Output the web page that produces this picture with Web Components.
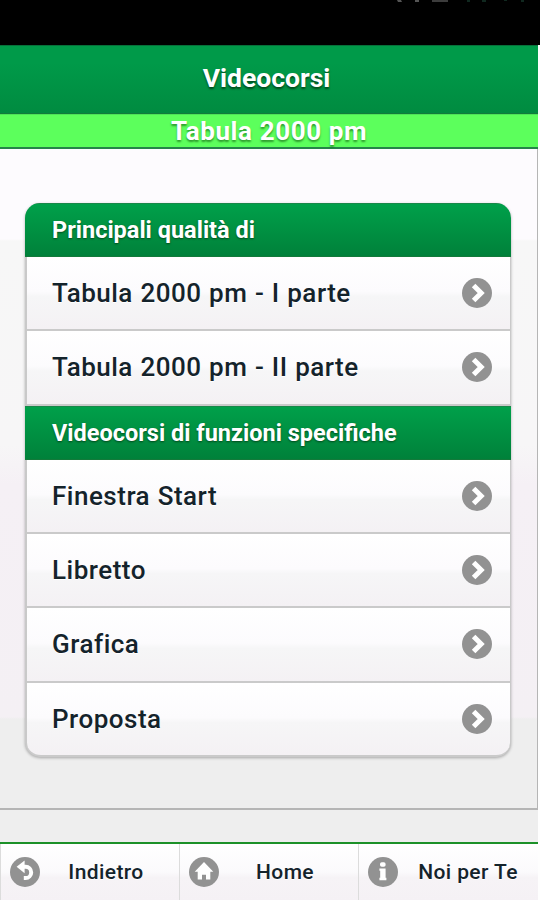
<!DOCTYPE html>
<html lang="it">
<head>
<meta charset="utf-8">
<title>Videocorsi</title>
<style>
    body {
        margin: 0;
        background: #fefefe;
        font-family: Roboto, sans-serif;
        font-weight: 500;
        color: #14232b;
    }
</style>
</head>
<body>
<course-app>
    <status-bar slot="status"></status-bar>
    <page-header slot="header" subtitle="Tabula 2000 pm">Videocorsi</page-header>
    <course-list>
        <list-divider>Principali qualità di</list-divider>
        <list-row>Tabula 2000 pm - I parte</list-row>
        <list-row>Tabula 2000 pm - II parte</list-row>
        <list-divider>Videocorsi di funzioni specifiche</list-divider>
        <list-row>Finestra Start</list-row>
        <list-row>Libretto</list-row>
        <list-row>Grafica</list-row>
        <list-row>Proposta</list-row>
    </course-list>
    <nav-bar slot="footer">
        <nav-item icon="back">Indietro</nav-item>
        <nav-item icon="home">Home</nav-item>
        <nav-item icon="info">Noi per Te</nav-item>
    </nav-bar>
</course-app>

<script>
const ICONS = {
    arrow: '<path d="M11.6 7.4l7.6 7.6-7.6 7.6" fill="none" stroke="#fff" stroke-width="5"/>',
    back: '<path d="M12 9.8h3.6a5.6 5.6 0 0 1 0 11.2h-1.8" fill="none" stroke="#fff" stroke-width="4"/><path d="M6.6 9.8l8-6.4v12.8z" fill="#fff"/>',
    home: '<path d="M15 5L5.7 14.8h3v7.7h4.3v-4.8h4v4.8h4.3v-7.7h3z" fill="#fff"/>',
    info: '<rect x="12" y="5.2" width="5.6" height="4.6" rx="1.8" fill="#fff"/><path d="M11.4 11.4h6.2v9.4h.8v2.4h-7v-2.4h.8v-7h-.8z" fill="#fff"/>'
};

class CircleIcon extends HTMLElement {
    connectedCallback() {
        const name = this.getAttribute('name') || 'arrow';

        this.attachShadow({ mode: 'open' });
        this.shadowRoot.innerHTML = `
            <style>
                :host {
                    display: block;
                    width: 30px;
                    height: 30px;
                    flex: none;
                }

                svg {
                    display: block;
                }
            </style>
            <svg width="30" height="30" viewBox="0 0 30 30">
                <circle cx="15" cy="15" r="15" fill="#929292"/>
                ${ICONS[name]}
            </svg>
        `;
    }
}

class StatusBar extends HTMLElement {
    connectedCallback() {
        this.attachShadow({ mode: 'open' });
        this.shadowRoot.innerHTML = `
            <style>
                :host {
                    display: block;
                    height: 45px;
                    background: #000;
                }

                svg {
                    display: block;
                }
            </style>
            <svg width="540" height="4" viewBox="0 0 540 4">
                <path d="M397 0h4l1 2h-4zM415 0h4v2h-4z" fill="#555"/>
                <path d="M432 0h16v2h-16z" fill="#3c3c3c"/>
                <path d="M467 0h3v2h-3zM482 0h4v2h-4zM504 0h3v1h-3zM521 0h3v2h-3z" fill="#10281f"/>
            </svg>
        `;
    }
}

class PageHeader extends HTMLElement {
    connectedCallback() {
        const subtitle = this.getAttribute('subtitle') || '';

        this.attachShadow({ mode: 'open' });
        this.shadowRoot.innerHTML = `
            <style>
                :host {
                    display: block;
                    color: #fff;
                    font-weight: 700;
                    text-align: center;
                    text-shadow: 0 2px 2px rgba(0, 30, 0, 0.6);
                }

                .title {
                    height: 69px;
                    box-sizing: border-box;
                    padding-right: 5px;
                    border-top: 1px solid #07713a;
                    border-bottom: 1px solid #117b3c;
                    background: linear-gradient(#009a49, #009a49 25%, #008b40);
                    font-size: 26.5px;
                    line-height: 64px;
                }

                .subtitle {
                    height: 35px;
                    box-sizing: border-box;
                    border-top: 1px solid #4de457;
                    border-bottom: 2px solid #258449;
                    background: #5cff5c;
                    font-size: 26px;
                    line-height: 32px;
                    letter-spacing: 0.6px;
                    text-shadow: 0 2px 2px rgba(0, 60, 0, 0.5);
                }
            </style>
            <div class="title"><slot></slot></div>
            <div class="subtitle">${subtitle}</div>
        `;
    }
}

class ListDivider extends HTMLElement {
    connectedCallback() {
        this.attachShadow({ mode: 'open' });
        this.shadowRoot.innerHTML = `
            <style>
                :host {
                    display: flex;
                    align-items: center;
                    height: 54px;
                    box-sizing: border-box;
                    margin: 0 -1px 0 -2px;
                    padding: 0 27px;
                    background: linear-gradient(#00a04a, #00813a);
                    border-top: 1px solid #188849;
                    border-bottom: 1px solid #137a3a;
                    color: #fff;
                    font-size: 23.5px;
                    font-weight: 700;
                    text-shadow: 0 1px 2px rgba(0, 30, 0, 0.6);
                }
            </style>
            <slot></slot>
        `;
    }
}

class ListRow extends HTMLElement {
    connectedCallback() {
        this.attachShadow({ mode: 'open' });
        this.shadowRoot.innerHTML = `
            <style>
                :host {
                    display: flex;
                    align-items: center;
                    justify-content: space-between;
                    flex: 1;
                    box-sizing: border-box;
                    padding: 0 18px 0 25px;
                    border-bottom: 2px solid #cacaca;
                    background: linear-gradient(#fff, #fcfbfd 48%, #f6f6f7 55%, #f4f1f4);
                    font-size: 26px;
                    letter-spacing: 0.5px;
                    word-spacing: 0.6px;
                    text-shadow: 0 1px 0 #fff;
                }
            </style>
            <span><slot></slot></span>
            <circle-icon name="arrow"></circle-icon>
        `;
    }
}

class CourseList extends HTMLElement {
    connectedCallback() {
        this.attachShadow({ mode: 'open' });
        this.shadowRoot.innerHTML = `
            <style>
                :host {
                    display: flex;
                    flex-direction: column;
                    box-sizing: border-box;
                    height: 554px;
                    padding: 0 1px 0 2px;
                    overflow: hidden;
                    border-radius: 15px;
                    background: #c9c9c9;
                    box-shadow: 0 1px 3px rgba(0, 0, 0, 0.3);
                }

                ::slotted(list-row:last-child) {
                    border-radius: 0 0 14px 14px;
                }
            </style>
            <slot></slot>
        `;
    }
}

class NavItem extends HTMLElement {
    connectedCallback() {
        const icon = this.getAttribute('icon') || 'info';

        this.attachShadow({ mode: 'open' });
        this.shadowRoot.innerHTML = `
            <style>
                :host {
                    display: flex;
                    align-items: center;
                    box-sizing: border-box;
                    padding-left: 9px;
                    border-left: 1px solid #dcdcdc;
                    font-size: 21px;
                    letter-spacing: 0.4px;
                    text-shadow: 0 1px 0 #fff;
                }

                .label {
                    flex: 1;
                    padding-right: 7px;
                    text-align: center;
                    white-space: nowrap;
                }

                :host(:last-child) .label {
                    padding-right: 0;
                }
            </style>
            <circle-icon name="${icon}"></circle-icon>
            <span class="label"><slot></slot></span>
        `;
    }
}

class NavBar extends HTMLElement {
    connectedCallback() {
        this.attachShadow({ mode: 'open' });
        this.shadowRoot.innerHTML = `
            <style>
                :host {
                    display: grid;
                    grid-template-columns: 179px 179px 1fr;
                    height: 58px;
                    box-sizing: border-box;
                    border-top: 2px solid #1c9128;
                    background: linear-gradient(#fff, #fbfafc 50%, #f6f3f6 60%, #f5f1f5);
                }
            </style>
            <slot></slot>
        `;
    }
}

class CourseApp extends HTMLElement {
    connectedCallback() {
        this.attachShadow({ mode: 'open' });
        this.shadowRoot.innerHTML = `
            <style>
                :host {
                    display: flex;
                    flex-direction: column;
                    height: 900px;
                    overflow: hidden;
                }

                .page {
                    display: flex;
                    flex-direction: column;
                    flex: 1;
                    margin-right: 2px;
                    background: linear-gradient(#fdfbfe 194px, #f7f7f7 196px, #f7f6f7 400px, #f5f0f5 440px, #f4f0f4 672px, #eee 674px);
                }

                .content {
                    height: 661px;
                    box-sizing: border-box;
                    padding: 54px 26px 0 25px;
                    border-right: 1px solid #b5b5b5;
                    border-bottom: 2px solid #b5b5b5;
                }

                .spacer {
                    flex: 1;
                }
            </style>
            <slot name="status"></slot>
            <div class="page">
                <slot name="header"></slot>
                <div class="content"><slot></slot></div>
                <div class="spacer"></div>
                <slot name="footer"></slot>
            </div>
        `;
    }
}

customElements.define('circle-icon', CircleIcon);
customElements.define('status-bar', StatusBar);
customElements.define('page-header', PageHeader);
customElements.define('list-divider', ListDivider);
customElements.define('list-row', ListRow);
customElements.define('course-list', CourseList);
customElements.define('nav-item', NavItem);
customElements.define('nav-bar', NavBar);
customElements.define('course-app', CourseApp);
</script>
</body>
</html>
